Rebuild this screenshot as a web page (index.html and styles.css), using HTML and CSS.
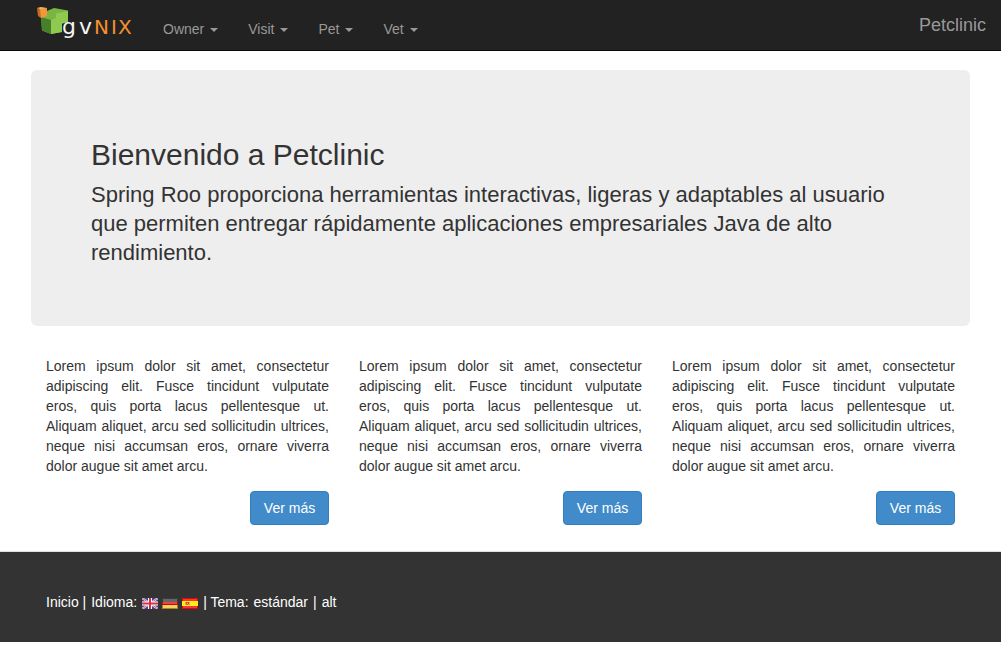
FILE: index.html
```html
<!DOCTYPE html>
<html lang="es">
<head>
<meta charset="utf-8">
<meta name="viewport" content="width=device-width, initial-scale=1">
<title>Petclinic</title>
<link rel="stylesheet" href="styles.css">
</head>
<body>
<header class="navbar">
  <a class="logo" href="#" aria-label="gvNIX">
    <svg width="100" height="36" viewBox="0 0 100 36">
      <path d="M5 12 11 11V7L18 4 32 6.500V18L26 19.500V28L15 30 6 26.500Z" fill="#79b541"/>
      <path d="M5 13 15 16V30L6 26.500Z" fill="#47802b"/>
      <path d="M20 9.500 32 7V18L26 19.500V28L15 30V16L20 14Z" fill="#8fc94f"/>
      <path d="M1 4 5 3 11 4 6 6Z" fill="#ffb267"/>
      <path d="M1 4 5 5.500V14L2 12Z" fill="#c76a24"/>
      <path d="M4 5 11 4V12L5 14Z" fill="#f4963a"/>
      <text class="logo-gv" x="26" y="30">g</text>
      <text class="logo-gv" x="43" y="30">v</text>
      <text class="logo-nix" x="58" y="30">N</text>
      <text class="logo-nix" x="75" y="30">I</text>
      <text class="logo-nix" x="82" y="30">X</text>
    </svg>
  </a>
  <nav class="menu">
    <button type="button" class="menu-item">Owner<span class="caret"></span></button>
    <button type="button" class="menu-item">Visit<span class="caret"></span></button>
    <button type="button" class="menu-item">Pet<span class="caret"></span></button>
    <button type="button" class="menu-item">Vet<span class="caret"></span></button>
  </nav>
  <a class="brand" href="#">Petclinic</a>
</header>

<main class="container">
  <section class="jumbotron">
    <h2>Bienvenido a Petclinic</h2>
    <p>Spring Roo proporciona herramientas interactivas, ligeras y adaptables al usuario que permiten entregar rápidamente aplicaciones empresariales Java de alto rendimiento.</p>
  </section>
  <div class="columns">
    <article class="column">
      <p>Lorem ipsum dolor sit amet, consectetur adipiscing elit. Fusce tincidunt vulputate eros,&nbsp;quis porta lacus pellentesque ut. Aliquam&nbsp;aliquet, arcu sed sollicitudin ultrices, neque&nbsp;nisi accumsan eros, ornare viverra dolor&nbsp;augue sit amet arcu.</p>
      <button type="button" class="btn">Ver más</button>
    </article>
    <article class="column">
      <p>Lorem ipsum dolor sit amet, consectetur adipiscing elit. Fusce tincidunt vulputate eros,&nbsp;quis porta lacus pellentesque ut. Aliquam&nbsp;aliquet, arcu sed sollicitudin ultrices, neque&nbsp;nisi accumsan eros, ornare viverra dolor&nbsp;augue sit amet arcu.</p>
      <button type="button" class="btn">Ver más</button>
    </article>
    <article class="column">
      <p>Lorem ipsum dolor sit amet, consectetur adipiscing elit. Fusce tincidunt vulputate eros,&nbsp;quis porta lacus pellentesque ut. Aliquam&nbsp;aliquet, arcu sed sollicitudin ultrices, neque&nbsp;nisi accumsan eros, ornare viverra dolor&nbsp;augue sit amet arcu.</p>
      <button type="button" class="btn">Ver más</button>
    </article>
  </div>
</main>

<footer class="footer">
  <div class="footer-text">
    <span><a href="#">Inicio</a> |</span>
    <span>Idioma:</span>
    <span class="languages">
      <a href="#" aria-label="English"><svg class="flag" width="16" height="11" viewBox="0 0 16 11">
        <rect width="16" height="11" fill="#35489b"/>
        <path d="M0 0 16 11M16 0 0 11" stroke="#e6e8f4" stroke-width="2"/>
        <path d="M0 0 16 11M16 0 0 11" stroke="#d8606c" stroke-width="1"/>
        <path d="M8 0V11M0 5.500H16" stroke="#fff" stroke-width="4"/>
        <path d="M8 0V11M0 5.500H16" stroke="#d8303c" stroke-width="2"/>
      </svg></a>
      <a href="#" aria-label="Deutsch"><svg class="flag" width="16" height="11" viewBox="0 0 16 11">
        <rect width="16" height="4" fill="#3c3c38"/>
        <rect x="1" y="1" width="14" height="3" fill="#666"/>
        <rect y="4" width="16" height="4" fill="#c80808"/>
        <rect x="1" y="4" width="14" height="2" fill="#e84545"/>
        <rect y="7" width="16" height="4" fill="#ad831b"/>
        <rect x="1" y="7" width="14" height="3" fill="#f3d264"/>
      </svg></a>
      <a href="#" aria-label="Español"><svg class="flag" width="16" height="11" viewBox="0 0 16 11">
        <rect width="16" height="11" fill="#e00808"/>
        <rect x="1" y="1" width="14" height="9" fill="#f43a32"/>
        <rect y="3" width="16" height="5" fill="#fbed20"/>
        <path d="M3 4H4V7H3ZM7 4H8V7H7Z" fill="#d9a368"/>
        <path d="M4 4H7V6L6 7H5L4 6Z" fill="#d64a28"/>
        <path d="M5 5H6V6H5Z" fill="#f0c0a0"/>
      </svg></a>
    </span>
    <span>| Tema:</span>
    <a href="#">estándar</a>
    <span>|</span>
    <a href="#">alt</a>
  </div>
</footer>
</body>
</html>
```
FILE: styles.css
```css
* {
  box-sizing: border-box;
}

body {
  margin: 0;
  background: #fff;
  color: #333;
  font-family: "Liberation Sans", Arial, sans-serif;
  font-size: 14px;
  line-height: 20px;
}

a {
  color: inherit;
  text-decoration: none;
}

button {
  font: inherit;
  cursor: pointer;
}

.navbar {
  display: flex;
  align-items: flex-start;
  min-height: 51px;
  padding: 0 15px 0 36px;
  background: #222;
  border-bottom: 1px solid #080808;
  color: #999;
}

.logo {
  display: flex;
  padding-top: 4px;
}

.logo-gv,
.logo-nix {
  font-family: "DejaVu Sans", sans-serif;
}

.logo-gv {
  font-size: 22px;
  fill: #f4f4f4;
}

.logo-nix {
  font-size: 20px;
  fill: #f7902d;
}

.menu {
  display: flex;
  flex: 1;
  padding: 4px 0 0 12px;
}

.menu-item {
  display: flex;
  align-items: center;
  gap: 6px;
  padding: 15px 15px 11px;
  border: 0;
  background: none;
  color: inherit;
}

.caret {
  border-top: 4px solid;
  border-left: 4px solid transparent;
  border-right: 4px solid transparent;
  margin-top: 2px;
}

.brand {
  padding: 15px 0;
  font-size: 18px;
}

.container {
  max-width: 969px;
  margin: 0 auto;
  padding: 19px 15px 26px;
}

.jumbotron {
  padding: 48px 60px;
  border-radius: 6px;
  background: #eee;
}

.jumbotron h2 {
  margin: 0;
  padding: 20px 0 9px;
  font-size: 30px;
  font-weight: 400;
  line-height: 33px;
}

.jumbotron p {
  margin: 0 0 11px;
  font-size: 22px;
  line-height: 29px;
}

.columns {
  display: grid;
  grid-template-columns: repeat(auto-fit, minmax(240px, 1fr));
  gap: 30px;
  padding: 30px 15px 0;
}

.column {
  text-align: right;
}

.column p {
  margin: 0 0 15px;
  text-align: justify;
}

.btn {
  min-width: 79px;
  padding: 6px 12px;
  border: 1px solid #357ebd;
  border-radius: 4px;
  background: #428bca;
  color: #fff;
  vertical-align: top;
}

.footer {
  padding: 40px 15px 30px;
  border-top: 1px solid #e0e0e0;
  background: #333;
  color: #fff;
}

.footer-text {
  display: flex;
  flex-wrap: wrap;
  gap: 5px;
  max-width: 909px;
  margin: 0 auto;
}

.languages {
  display: flex;
  gap: 4px;
}

.flag {
  vertical-align: -2px;
}
```
